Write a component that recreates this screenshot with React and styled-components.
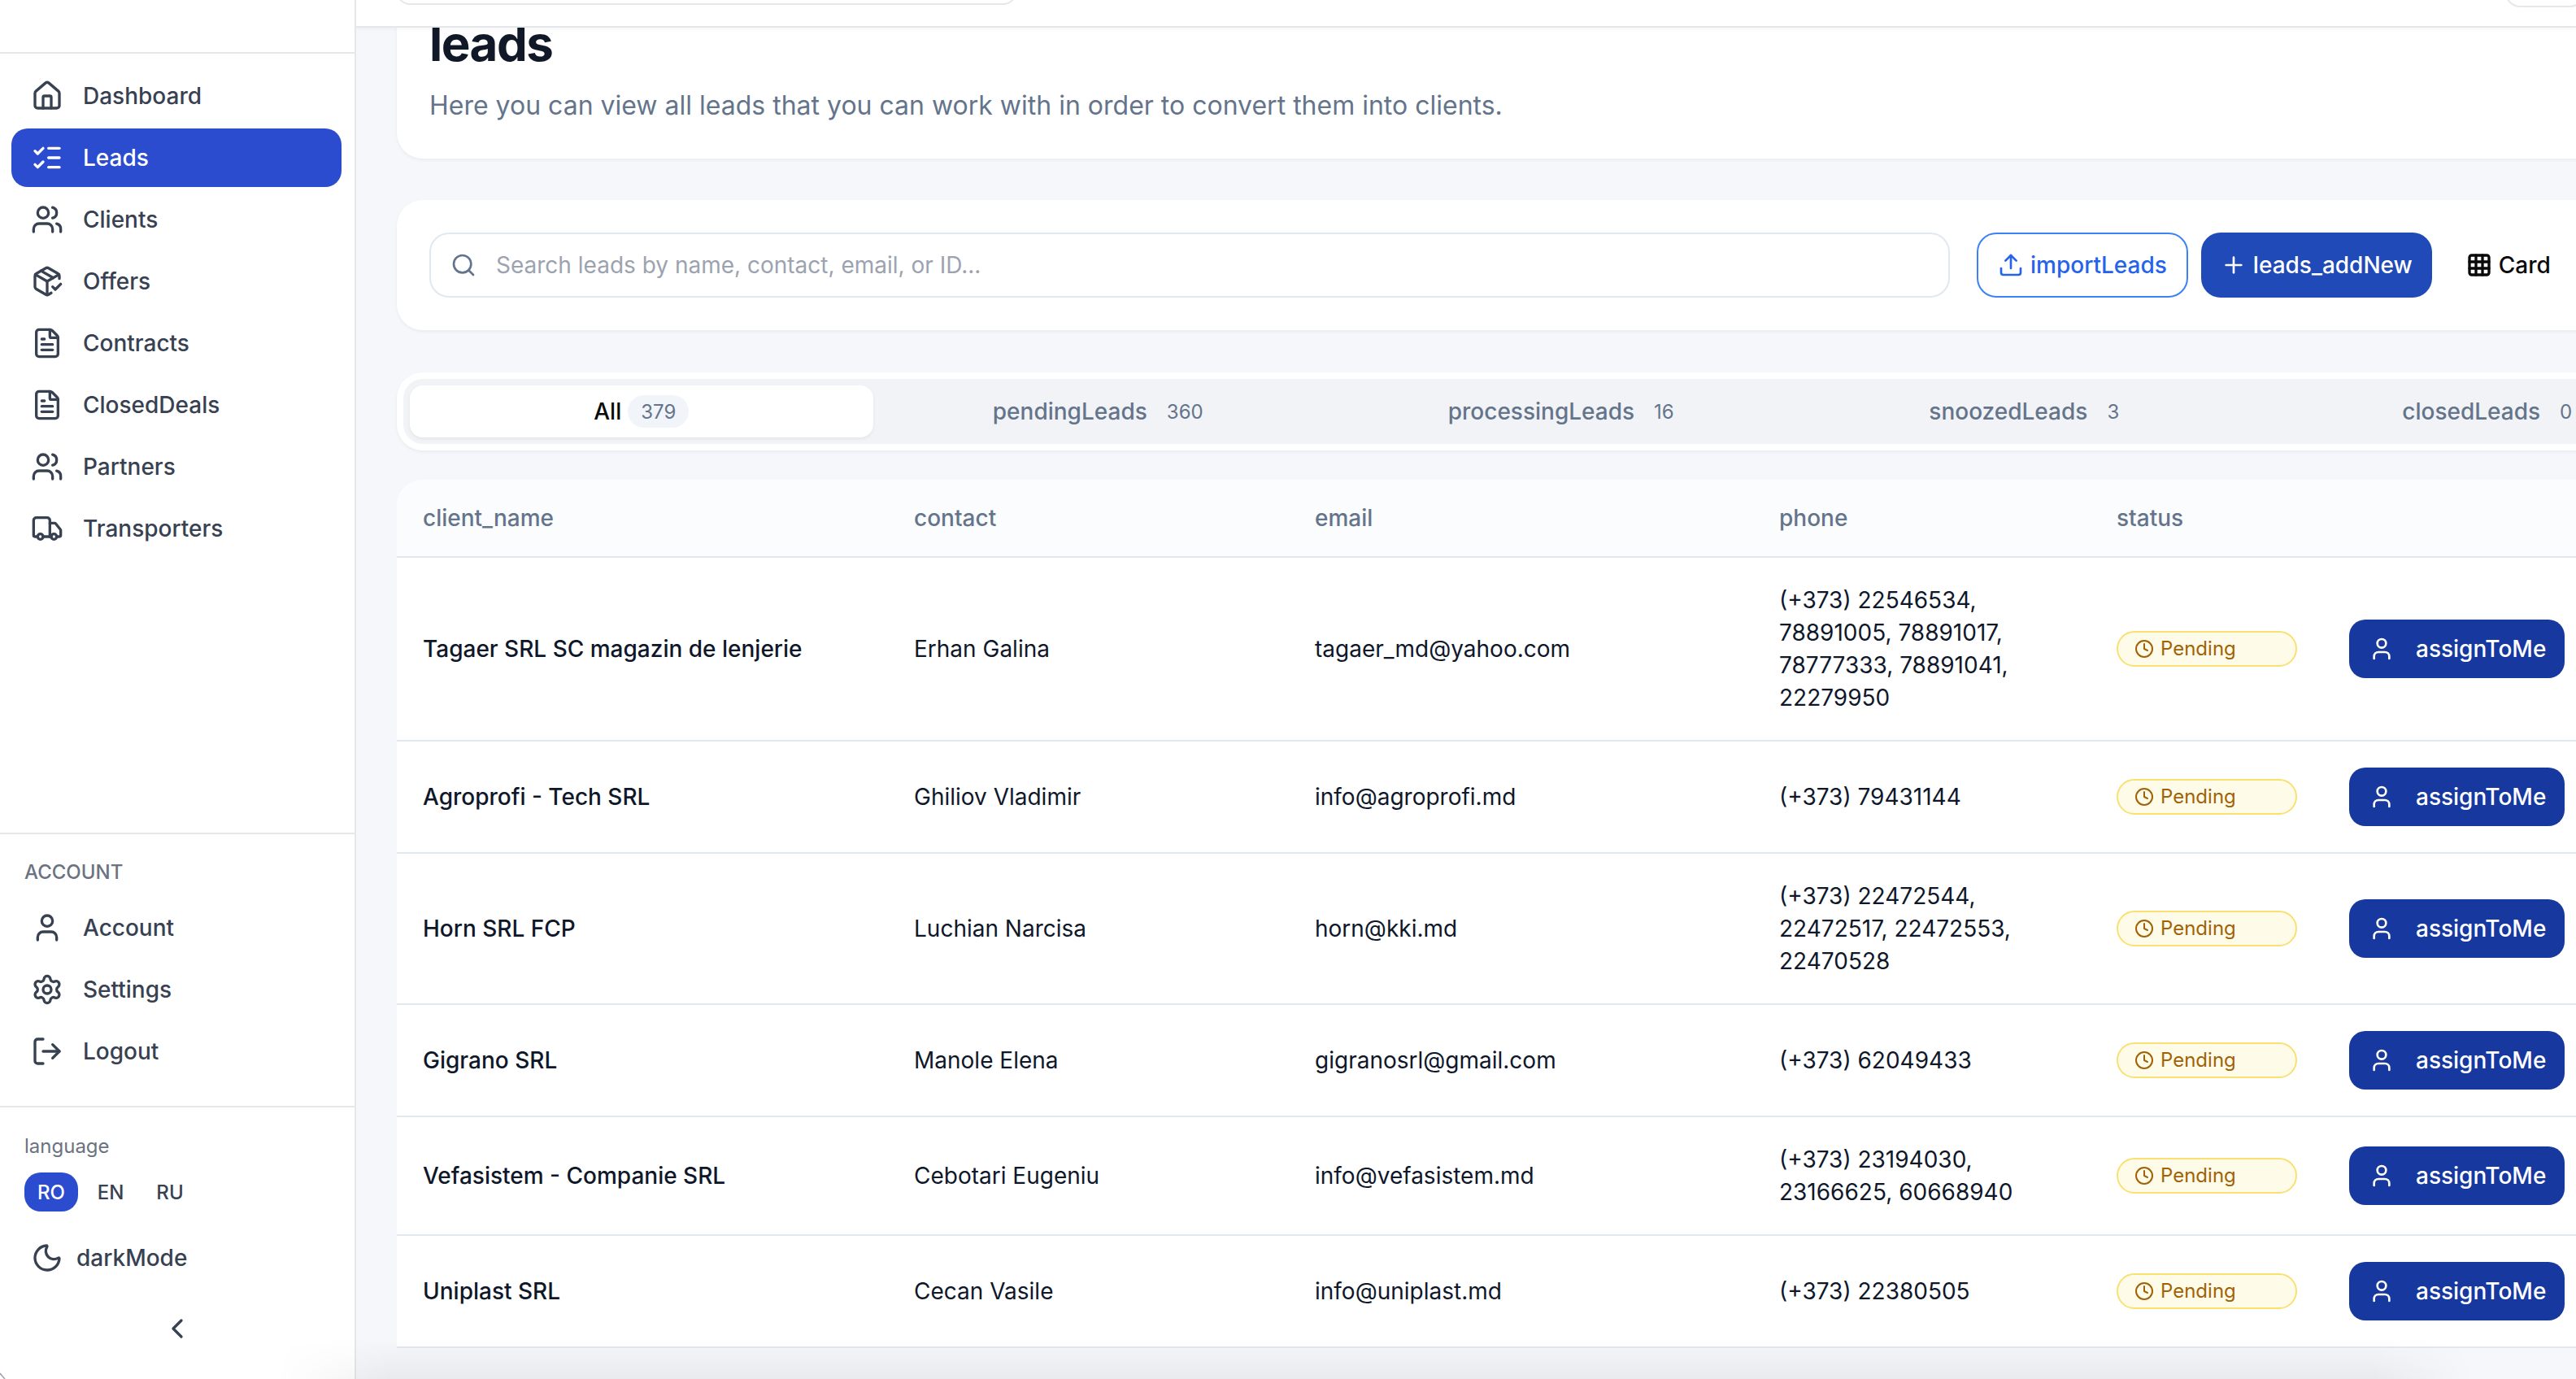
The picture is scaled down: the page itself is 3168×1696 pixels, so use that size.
import React from "react"
import styled, { createGlobalStyle } from "styled-components"
import {
  Home,
  ListChecks,
  Users,
  PackageCheck,
  FileText,
  Truck,
  User,
  Settings,
  LogOut,
  Moon,
  ChevronLeft,
  Search,
  Upload,
  Plus,
  Grid3x3,
  Clock,
} from "lucide-react"

const GlobalStyle = createGlobalStyle`
  html, body {
    margin: 0;
    height: 100%;
    overflow: hidden;
    background: #f5f7fb;
    font-family: Inter, "Noto Sans", sans-serif;
  }
  * { box-sizing: border-box; }
`

const Page = styled.div`
  display: flex;
  width: 3168px;
  height: 1696px;
  overflow: hidden;
`

const Sidebar = styled.aside`
  flex: 0 0 438px;
  height: 1696px;
  display: flex;
  flex-direction: column;
  background: #fff;
  border-right: 2px solid #e5e7eb;
`

const SideTop = styled.div`
  height: 66px;
  flex: none;
  border-bottom: 2px solid #e5e7eb;
`

const Nav = styled.nav`
  flex: 1;
  display: flex;
  flex-direction: column;
  gap: 4px;
  padding: 16px 16px 16px 14px;
`

const NavItem = styled.a`
  display: flex;
  align-items: center;
  gap: 24px;
  height: 72px;
  padding-left: 24px;
  border-radius: 20px;
  font-size: 28px;
  font-weight: 500;
  color: ${(p) => (p.$active ? "#fff" : "#374151")};
  background: ${(p) => (p.$active ? "#2b4ccf" : "transparent")};
  svg {
    flex: none;
  }
`

const AccountBlock = styled.div`
  flex: none;
  height: 338px;
  padding: 31px 16px 0 14px;
  border-top: 2px solid #e5e7eb;
  border-bottom: 2px solid #e5e7eb;
`

const SectionLabel = styled.div`
  font-size: 24px;
  line-height: 32px;
  font-weight: 500;
  color: #6b7280;
  padding-left: 16px;
`

const AccountNav = styled.div`
  display: flex;
  flex-direction: column;
  gap: 4px;
  margin-top: 16px;
`

const Footer = styled.div`
  flex: none;
  height: 334px;
  padding: 32px 14px 0;
`

const LangLabel = styled(SectionLabel)`
  font-weight: 400;
`

const LangRow = styled.div`
  display: flex;
  gap: 7px;
  margin-top: 16px;
  padding-left: 16px;
`

const LangButton = styled.span`
  display: flex;
  align-items: center;
  justify-content: center;
  width: 66px;
  height: 48px;
  border-radius: 20px;
  font-size: 24px;
  font-weight: 500;
  color: ${(p) => (p.$active ? "#fff" : "#374151")};
  background: ${(p) => (p.$active ? "#2b4ccf" : "transparent")};
`

const DarkToggle = styled.div`
  display: flex;
  align-items: center;
  gap: 16px;
  height: 72px;
  margin-top: 21px;
  padding-left: 24px;
  font-size: 28px;
  font-weight: 500;
  color: #374151;
`

const Collapse = styled.div`
  display: flex;
  justify-content: center;
  margin-top: 31px;
  color: #374151;
`

const Main = styled.main`
  flex: 1;
  min-width: 0;
  display: flex;
  flex-direction: column;
  height: 1696px;
  overflow: hidden;
`

const TopBar = styled.header`
  flex: none;
  height: 34px;
  display: flex;
  justify-content: space-between;
  align-items: flex-end;
  padding: 0 0 26px 50px;
  position: relative;
  z-index: 2;
  background: #fff;
  border-bottom: 2px solid #e5e7eb;
  box-shadow: 0 2px 4px rgba(0, 0, 0, 0.04);
`

const TopSearch = styled.div`
  width: 762px;
  height: 40px;
  border: 2px solid #e5e7eb;
  border-radius: 16px;
`

const TopPill = styled.div`
  width: 100px;
  height: 40px;
  margin-bottom: -3px;
  border: 2px solid #e5e7eb;
  border-radius: 24px;
  transform: translateX(12px);
`

const Content = styled.div`
  width: 2890px;
  margin-left: 50px;
  display: flex;
  flex-direction: column;
`

const Card = styled.section`
  background: #fff;
  border-radius: 32px;
  box-shadow: 0 2px 4px rgba(15, 23, 42, 0.05);
`

const TitleCard = styled(Card)`
  height: 210px;
  margin-top: -49px;
  padding: 28px 40px 0;
`

const Title = styled.h1`
  margin: 0;
  font-size: 60px;
  line-height: 80px;
  font-weight: 700;
  letter-spacing: -1.5px;
  color: #111827;
`

const Subtitle = styled.p`
  margin: 13px 0 0;
  font-size: 32px;
  line-height: 48px;
  color: #64748b;
`

const ToolCard = styled(Card)`
  height: 160px;
  margin-top: 51px;
  padding: 40px;
  display: flex;
  align-items: flex-start;
`

const SearchBox = styled.div`
  flex: none;
  width: 1870px;
  height: 80px;
  display: flex;
  align-items: center;
  gap: 24px;
  padding-left: 24px;
  border: 2px solid #e2e8f0;
  border-radius: 24px;
  font-size: 28px;
  color: #9ca3af;
  svg {
    color: #64748b;
  }
`

const ActionButton = styled.button`
  flex: none;
  height: 80px;
  display: flex;
  align-items: center;
  gap: 8px;
  margin-left: ${(p) => p.$ml}px;
  padding: 0 24px;
  border-radius: 24px;
  font-family: inherit;
  font-size: 28px;
  font-weight: 500;
  border: ${(p) => (p.$outlined ? "2px solid #3b82f6" : "none")};
  background: ${(p) => (p.$outlined ? "#fff" : "#1f4ab8")};
  color: ${(p) => (p.$outlined ? "#2563eb" : "#fff")};
`

const ViewToggle = styled.div`
  flex: none;
  height: 80px;
  display: flex;
  align-items: center;
  gap: 8px;
  margin-left: 42px;
  font-size: 28px;
  font-weight: 500;
  color: #0a0a0a;
`

const EdgeButton = styled.div`
  flex: none;
  width: 120px;
  height: 80px;
  margin-left: 32px;
  border: 2px solid #e5e7eb;
  border-radius: 24px;
`

const TabsCard = styled(Card)`
  height: 96px;
  margin-top: 52px;
  padding: 8px;
`

const TabList = styled.div`
  height: 80px;
  display: flex;
  padding: 8px;
  background: #f1f3f6;
  border-radius: 24px;
`

const Tab = styled.div`
  flex: 0 0 569.5px;
  height: 64px;
  display: flex;
  align-items: center;
  justify-content: center;
  gap: 8px;
  border-radius: 16px;
  font-size: 28px;
  font-weight: 500;
  color: ${(p) => (p.$active ? "#0a0a0a" : "#64748b")};
  background: ${(p) => (p.$active ? "#fff" : "transparent")};
  box-shadow: ${(p) => (p.$active ? "0 2px 4px rgba(15,23,42,.06)" : "none")};
`

const TabCount = styled.span`
  min-width: 40px;
  height: 40px;
  display: flex;
  align-items: center;
  padding: 0 16px;
  border-radius: 20px;
  font-size: 24px;
  font-weight: 400;
  color: #64748b;
  background: ${(p) => (p.$active ? "#f1f5f9" : "transparent")};
`

const Table = styled.div`
  margin-top: 36px;
  background: #fff;
  border-radius: 32px 32px 0 0;
  overflow: hidden;
`

const Row = styled.div`
  display: grid;
  grid-template-columns: 604px 493px 571px 415px 286px 1fr;
  align-items: center;
  padding: ${(p) => (p.$head ? "0" : "32px 0")};
  height: ${(p) => (p.$head ? "96px" : "auto")};
  border-bottom: 2px solid #e2e8f0;
  background: ${(p) => (p.$head ? "#fbfcfe" : "transparent")};
`

const HeadCell = styled.div`
  padding-left: 32px;
  font-size: 28px;
  line-height: 40px;
  font-weight: 500;
  color: #64748b;
`

const Cell = styled.div`
  padding: 0 32px;
  font-size: 28px;
  line-height: 40px;
  font-weight: ${(p) => (p.$strong ? 500 : 400)};
  color: #0f172a;
`

const StatusBadge = styled.span`
  width: 222px;
  height: 44px;
  display: flex;
  align-items: center;
  gap: 8px;
  padding-left: 20px;
  border: 2px solid #fae072;
  border-radius: 22px;
  font-size: 24px;
  color: #a16207;
  background: #fefce8;
`

const AssignButton = styled.button`
  width: 265px;
  height: 72px;
  display: flex;
  align-items: center;
  gap: 26px;
  padding: 0 0 0 24px;
  border: none;
  border-radius: 20px;
  font-family: inherit;
  font-size: 28px;
  font-weight: 500;
  color: #fff;
  background: #16389f;
`

const BottomFade = styled.div`
  position: fixed;
  left: 0;
  right: 0;
  bottom: 0;
  height: 50px;
  z-index: 3;
  pointer-events: none;
  background: linear-gradient(rgba(0, 0, 0, 0), rgba(0, 0, 0, 0.05));
  mask-image: linear-gradient(to right, transparent 340px, #000 480px, #000 2920px, transparent 3040px);
`

const CornerMark = styled.svg`
  position: fixed;
  left: 0;
  bottom: 0;
  z-index: 4;
`

const mainNav = [
  { label: "Dashboard", icon: Home },
  { label: "Leads", icon: ListChecks, active: true },
  { label: "Clients", icon: Users },
  { label: "Offers", icon: PackageCheck },
  { label: "Contracts", icon: FileText },
  { label: "ClosedDeals", icon: FileText },
  { label: "Partners", icon: Users },
  { label: "Transporters", icon: Truck },
]

const accountNav = [
  { label: "Account", icon: User },
  { label: "Settings", icon: Settings },
  { label: "Logout", icon: LogOut },
]

const tabs = [
  { label: "All", count: 379, active: true },
  { label: "pendingLeads", count: 360 },
  { label: "processingLeads", count: 16 },
  { label: "snoozedLeads", count: 3 },
  { label: "closedLeads", count: 0 },
]

const leads = [
  ["Tagaer SRL SC magazin de lenjerie", "Erhan Galina", "tagaer_md@yahoo.com", "(+373) 22546534, 78891005, 78891017, 78777333, 78891041, 22279950"],
  ["Agroprofi - Tech SRL", "Ghiliov Vladimir", "info@agroprofi.md", "(+373) 79431144"],
  ["Horn SRL FCP", "Luchian Narcisa", "horn@kki.md", "(+373) 22472544, 22472517, 22472553, 22470528"],
  ["Gigrano SRL", "Manole Elena", "gigranosrl@gmail.com", "(+373) 62049433"],
  ["Vefasistem - Companie SRL", "Cebotari Eugeniu", "info@vefasistem.md", "(+373) 23194030, 23166625, 60668940"],
  ["Uniplast SRL", "Cecan Vasile", "info@uniplast.md", "(+373) 22380505"],
]

const columns = ["client_name", "contact", "email", "phone", "status"]

function NavLink({ item }) {
  const Icon = item.icon
  return (
    <NavItem $active={item.active}>
      <Icon size={40} strokeWidth={2} />
      {item.label}
    </NavItem>
  )
}

export default function App() {
  return (
    <Page>
      <GlobalStyle />
      <Sidebar>
        <SideTop />
        <Nav>
          {mainNav.map((item) => (
            <NavLink key={item.label} item={item} />
          ))}
        </Nav>
        <AccountBlock>
          <SectionLabel>ACCOUNT</SectionLabel>
          <AccountNav>
            {accountNav.map((item) => (
              <NavLink key={item.label} item={item} />
            ))}
          </AccountNav>
        </AccountBlock>
        <Footer>
          <LangLabel>language</LangLabel>
          <LangRow>
            <LangButton $active>RO</LangButton>
            <LangButton>EN</LangButton>
            <LangButton>RU</LangButton>
          </LangRow>
          <DarkToggle>
            <Moon size={40} strokeWidth={2} />
            darkMode
          </DarkToggle>
          <Collapse>
            <ChevronLeft size={40} strokeWidth={2} />
          </Collapse>
        </Footer>
      </Sidebar>
      <Main>
        <TopBar>
          <TopSearch />
          <TopPill />
        </TopBar>
        <Content>
          <TitleCard>
            <Title>leads</Title>
            <Subtitle>Here you can view all leads that you can work with in order to convert them into clients.</Subtitle>
          </TitleCard>
          <ToolCard>
            <SearchBox>
              <Search size={32} strokeWidth={2} />
              Search leads by name, contact, email, or ID...
            </SearchBox>
            <ActionButton $outlined $ml={33}>
              <Upload size={32} strokeWidth={2} />
              importLeads
            </ActionButton>
            <ActionButton $ml={16}>
              <Plus size={32} strokeWidth={2} />
              leads_addNew
            </ActionButton>
            <ViewToggle>
              <Grid3x3 size={32} strokeWidth={2.5} />
              Card
            </ViewToggle>
            <EdgeButton />
          </ToolCard>
          <TabsCard>
            <TabList>
              {tabs.map((tab) => (
                <Tab key={tab.label} $active={tab.active}>
                  {tab.label}
                  <TabCount $active={tab.active}>{tab.count}</TabCount>
                </Tab>
              ))}
            </TabList>
          </TabsCard>
          <Table>
            <Row $head>
              {columns.map((col) => (
                <HeadCell key={col}>{col}</HeadCell>
              ))}
              <HeadCell />
            </Row>
            {leads.map(([name, contact, email, phone]) => (
              <Row key={name}>
                <Cell $strong>{name}</Cell>
                <Cell>{contact}</Cell>
                <Cell>{email}</Cell>
                <Cell>{phone}</Cell>
                <Cell>
                  <StatusBadge>
                    <Clock size={24} strokeWidth={2} />
                    Pending
                  </StatusBadge>
                </Cell>
                <Cell>
                  <AssignButton>
                    <User size={32} strokeWidth={2} />
                    assignToMe
                  </AssignButton>
                </Cell>
              </Row>
            ))}
          </Table>
        </Content>
      </Main>
      <BottomFade />
      <CornerMark width="8" height="8" viewBox="0 0 8 8">
        <path d="M0 1 L6 8" stroke="#9ca3af" strokeWidth="1.5" fill="none" />
      </CornerMark>
    </Page>
  )
}
